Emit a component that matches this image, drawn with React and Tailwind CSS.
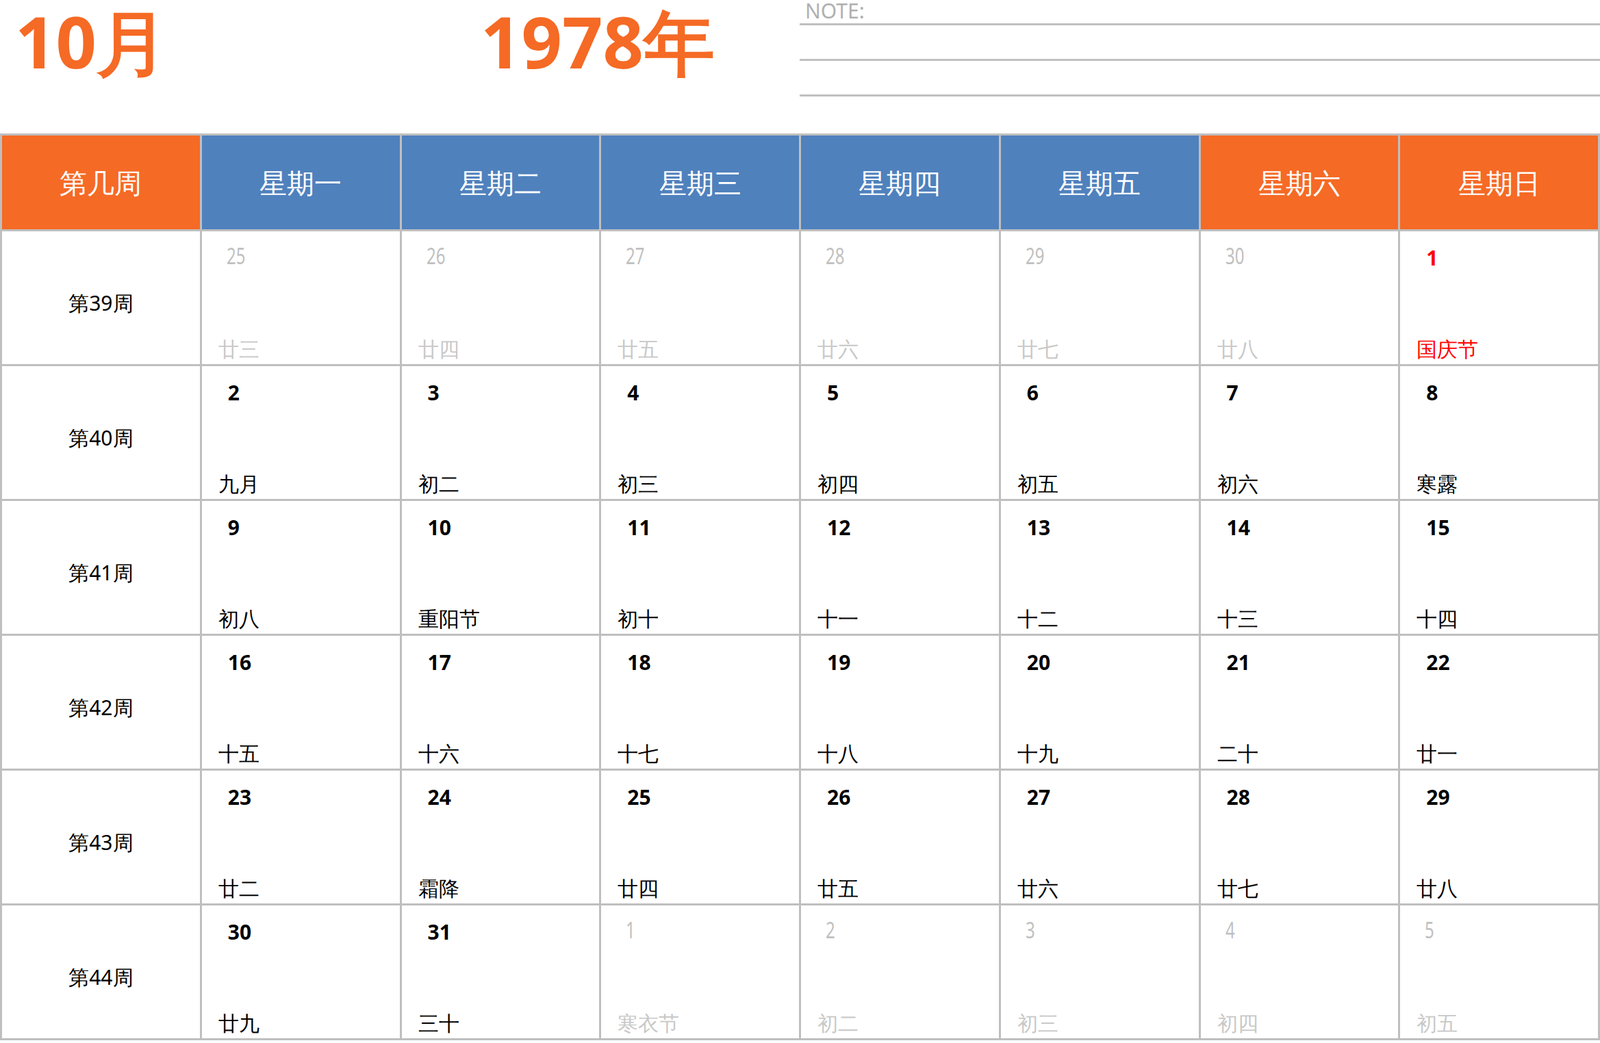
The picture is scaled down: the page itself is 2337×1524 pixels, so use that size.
const weeks = [
  { label: "第39周", days: [["25", "廿三", "o"], ["26", "廿四", "o"], ["27", "廿五", "o"], ["28", "廿六", "o"], ["29", "廿七", "o"], ["30", "廿八", "o"], ["1", "国庆节", "r"]] },
  { label: "第40周", days: [["2", "九月"], ["3", "初二"], ["4", "初三"], ["5", "初四"], ["6", "初五"], ["7", "初六"], ["8", "寒露"]] },
  { label: "第41周", days: [["9", "初八"], ["10", "重阳节"], ["11", "初十"], ["12", "十一"], ["13", "十二"], ["14", "十三"], ["15", "十四"]] },
  { label: "第42周", days: [["16", "十五"], ["17", "十六"], ["18", "十七"], ["19", "十八"], ["20", "十九"], ["21", "二十"], ["22", "廿一"]] },
  { label: "第43周", days: [["23", "廿二"], ["24", "霜降"], ["25", "廿四"], ["26", "廿五"], ["27", "廿六"], ["28", "廿七"], ["29", "廿八"]] },
  { label: "第44周", days: [["30", "廿九"], ["31", "三十"], ["1", "寒衣节", "o"], ["2", "初二", "o"], ["3", "初三", "o"], ["4", "初四", "o"], ["5", "初五", "o"]] },
];

const heads = [
  ["第几周", "bg-[#f56a25]"],
  ["星期一", "bg-[#4f81bd]"],
  ["星期二", "bg-[#4f81bd]"],
  ["星期三", "bg-[#4f81bd]"],
  ["星期四", "bg-[#4f81bd]"],
  ["星期五", "bg-[#4f81bd]"],
  ["星期六", "bg-[#f56a25]"],
  ["星期日", "bg-[#f56a25]"],
];

const serif = "font-['Liberation_Serif','Noto_Sans_CJK_SC',serif]";
const sans = "font-['Open_Sans','Noto_Sans_CJK_SC',sans-serif]";

function DayCell({ num, lunar, kind }) {
  const other = kind === "o";
  const red = kind === "r";
  return (
    <div className="relative h-[197px] border-r-[3px] border-b-[3px] border-[#bfbfbf] bg-white">
      <p
        className={
          other
            ? `absolute left-[36px] top-[12px] text-[32px] text-[#c0c0c0] scale-x-75 origin-left ${serif}`
            : `absolute left-[38px] top-[16px] text-[30px] font-bold ${sans} ${red ? "text-[#ff0000]" : "text-black"}`
        }
      >
        {num}
      </p>
      <p
        className={`absolute left-[24px] bottom-[0px] text-[30px] ${serif} ${
          other ? "text-[#c8c8c8]" : red ? "text-[#ff0000]" : "text-black"
        }`}
      >
        {lunar}
      </p>
    </div>
  );
}

export default function App() {
  return (
    <div className="w-[2337px] h-[1524px] bg-white overflow-hidden">
      <div className="flex h-[195px]">
        <div className="w-[702px] pl-[22px]">
          <p className={`text-[104px] leading-[1.15] font-bold text-[#f56a25] ${sans}`}>10月</p>
        </div>
        <div className="w-[466px]">
          <p className={`text-[104px] leading-[1.15] font-bold text-[#f56a25] ${sans}`}>1978年</p>
        </div>
        <div className="flex-1 flex flex-col">
          <p className={`text-[30px] leading-[32px] text-[#b0b0b0] pl-[8px] ${serif}`}>NOTE:</p>
          <div className="mt-[2px] h-[3px] bg-[#c0c0c0]" />
          <div className="mt-[49px] h-[3px] bg-[#c0c0c0]" />
          <div className="mt-[49px] h-[3px] bg-[#c0c0c0]" />
        </div>
      </div>
      <div className="grid grid-cols-8 border-t-[3px] border-l-[3px] border-[#bfbfbf]">
        {heads.map(([t, bg]) => (
          <div
            key={t}
            className={`h-[140px] flex items-center justify-center border-r-[3px] border-b-[3px] border-[#bfbfbf] text-white text-[40px] ${serif} ${bg}`}
          >
            {t}
          </div>
        ))}
        {weeks.map((w) => [
          <div
            key={w.label}
            className={`h-[197px] flex items-center justify-center pt-[14px] border-r-[3px] border-b-[3px] border-[#bfbfbf] text-[30px] text-black ${serif}`}
          >
            {w.label}
          </div>,
          ...w.days.map(([n, l, k], i) => <DayCell key={w.label + i} num={n} lunar={l} kind={k} />),
        ])}
      </div>
    </div>
  );
}
